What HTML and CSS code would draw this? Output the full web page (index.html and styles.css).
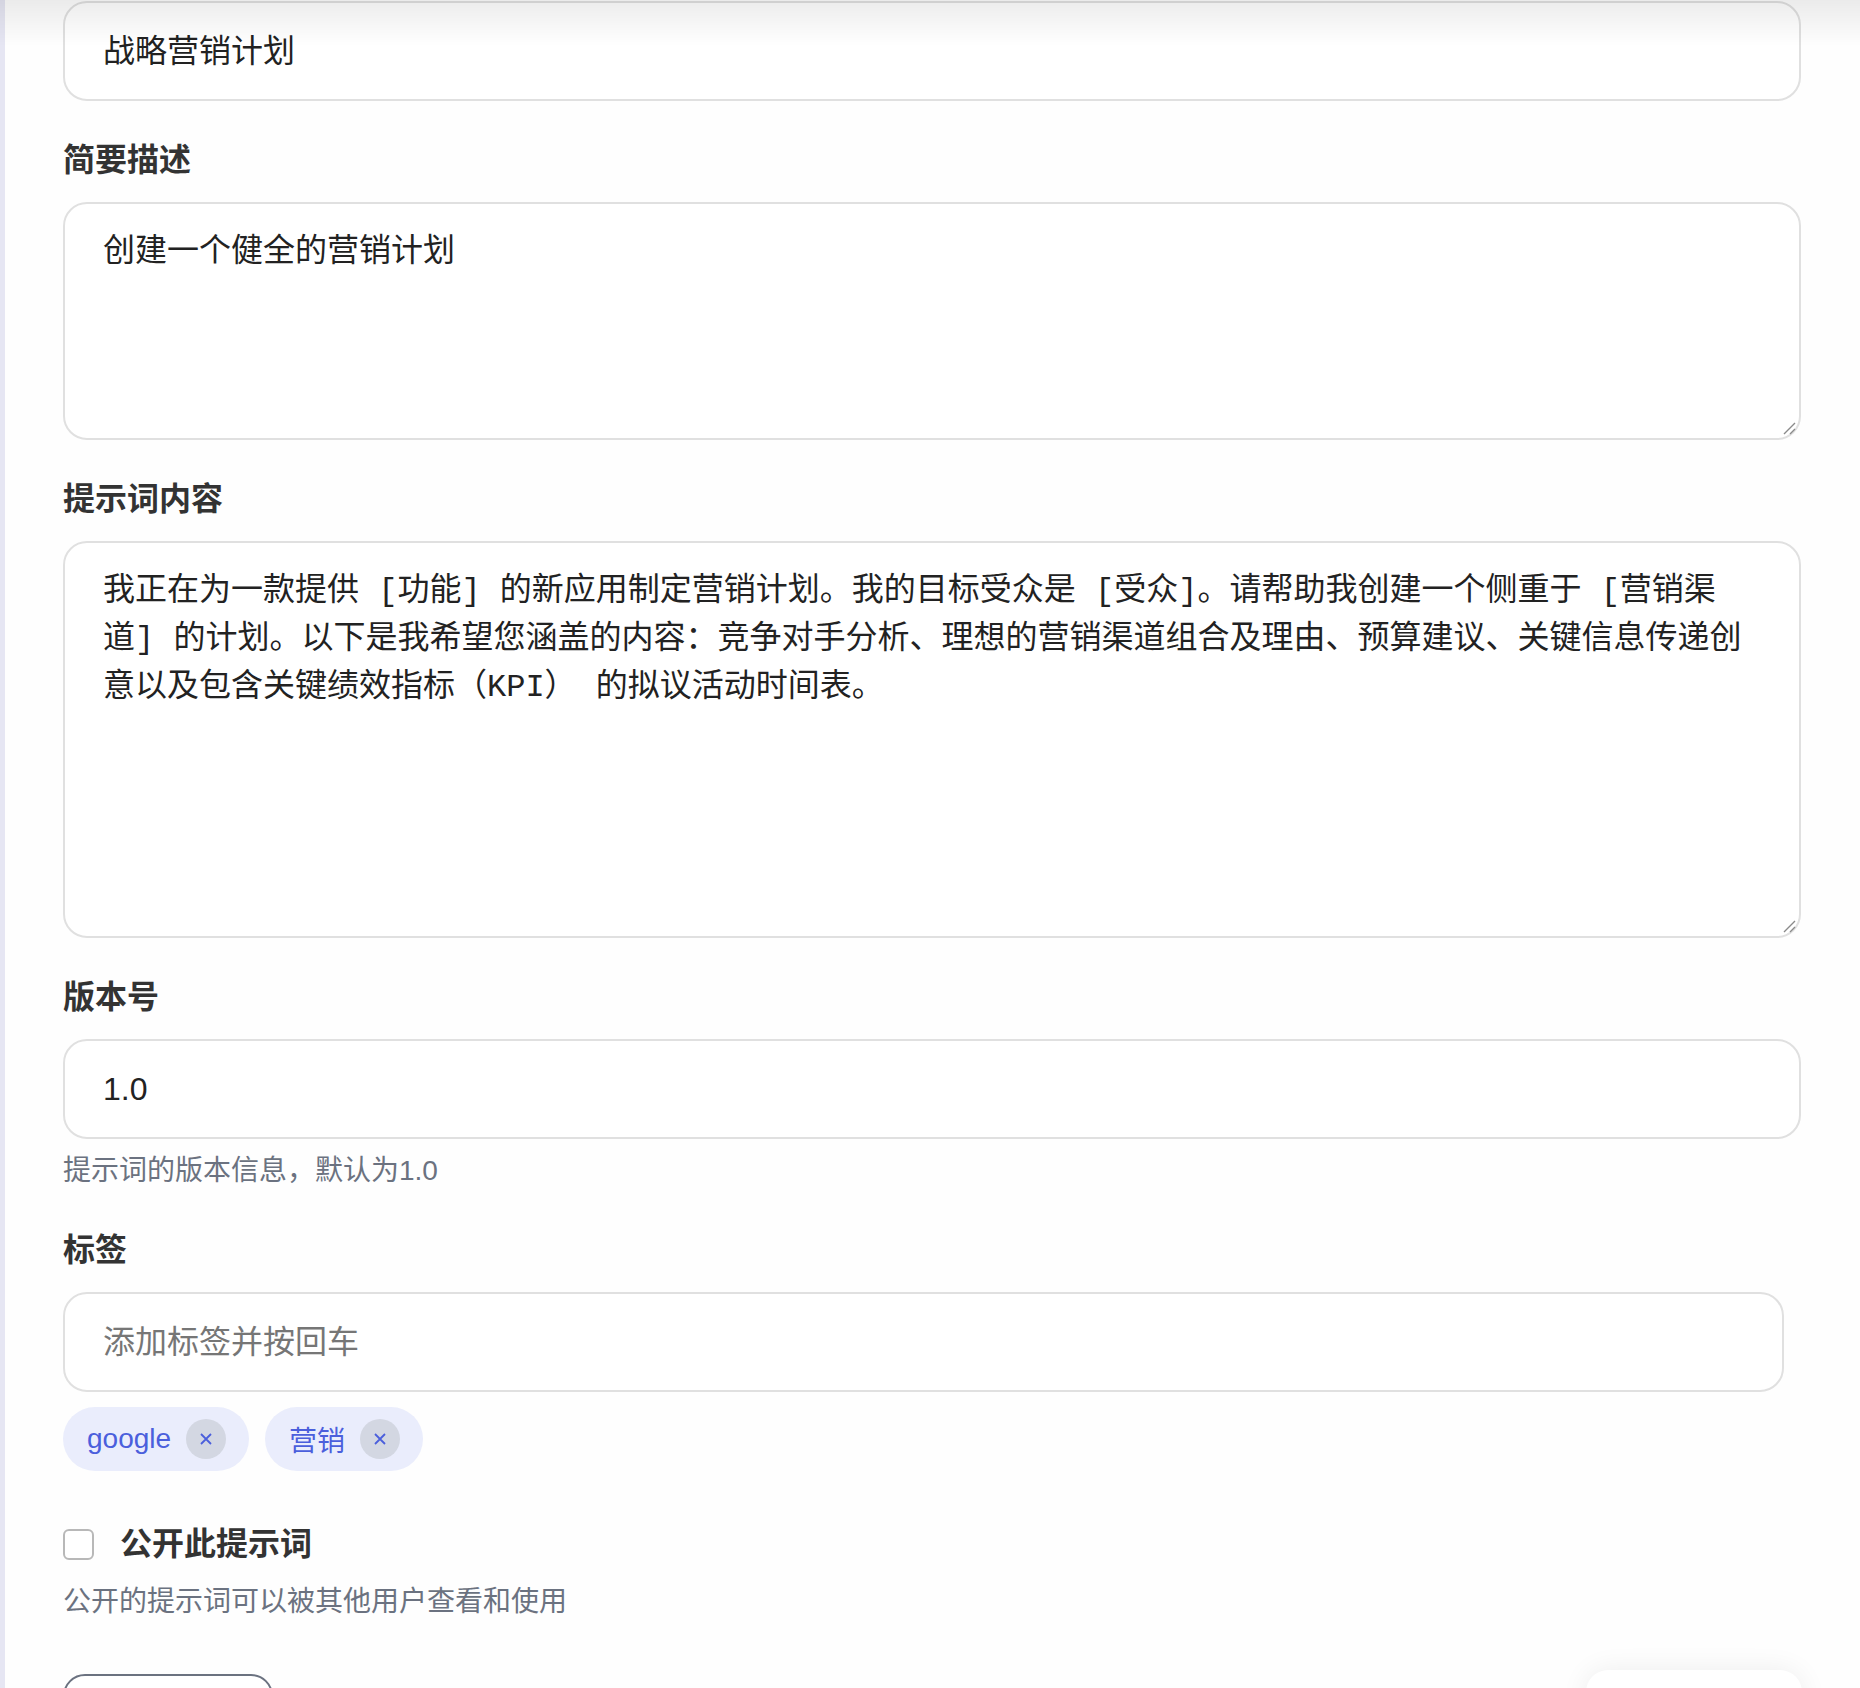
FILE: index.html
```html
<!DOCTYPE html>
<html lang="zh-CN">
	<head>
		<meta charset="utf-8" />
		<link rel="stylesheet" href="styles.css">
		<title>编辑提示词</title>
	</head>
	<body>
		<div class="shade"></div>
		<div class="page">
			<form class="form">
				<div class="field">
					<input class="text-input title-input" type="text" value="战略营销计划" />
				</div>

				<div class="field">
					<label class="label">简要描述</label>
					<div class="area">
						<textarea class="text-area short">创建一个健全的营销计划</textarea>
						<svg class="grip" width="16" height="16" viewBox="0 0 16 16"><path d="M15 4 L4 15 M15 10 L10 15" stroke="#8a8a8a" stroke-width="1.4" fill="none"/></svg>
					</div>
				</div>

				<div class="field">
					<label class="label">提示词内容</label>
					<div class="area">
						<textarea class="text-area tall">我正在为一款提供 [功能] 的新应用制定营销计划。我的目标受众是 [受众]。请帮助我创建一个侧重于 [营销渠道] 的计划。以下是我希望您涵盖的内容：竞争对手分析、理想的营销渠道组合及理由、预算建议、关键信息传递创意以及包含关键绩效指标（KPI） 的拟议活动时间表。</textarea>
						<svg class="grip" width="16" height="16" viewBox="0 0 16 16"><path d="M15 4 L4 15 M15 10 L10 15" stroke="#8a8a8a" stroke-width="1.4" fill="none"/></svg>
					</div>
				</div>

				<div class="field">
					<label class="label">版本号</label>
					<input class="text-input" type="text" value="1.0" />
					<p class="hint">提示词的版本信息，默认为1.0</p>
				</div>

				<div class="field">
					<label class="label">标签</label>
					<input class="text-input tag-input" type="text" placeholder="添加标签并按回车" />
					<div class="tags">
						<span class="tag">google<span class="tag-x"><svg width="14" height="14" viewBox="0 0 14 14"><path d="M2 2 L12 12 M12 2 L2 12" stroke="#4b5fdc" stroke-width="1.8" fill="none"/></svg></span></span>
						<span class="tag">营销<span class="tag-x"><svg width="14" height="14" viewBox="0 0 14 14"><path d="M2 2 L12 12 M12 2 L2 12" stroke="#4b5fdc" stroke-width="1.8" fill="none"/></svg></span></span>
					</div>
				</div>

				<div class="check-row">
					<span class="checkbox"></span>
					<span class="check-label">公开此提示词</span>
				</div>
				<p class="hint public-hint">公开的提示词可以被其他用户查看和使用</p>

				<div class="actions">
					<button class="btn-cancel" type="button" aria-label="取消"></button>
					<div class="btn-save"></div>
				</div>
			</form>
		</div>
	</body>
</html>
```

FILE: styles.css
```css
body,html{
	margin:0;
	padding:0;
	background-color:#fefefe;
	font-family:"Liberation Sans","Noto Sans CJK SC",sans-serif;
	color:#222;
}
p,form{
	margin:0;
	padding:0;
}
.shade{
	position:fixed;
	left:0;
	top:0;
	right:0;
	height:46px;
	background:linear-gradient(rgba(0,0,0,0.075),rgba(0,0,0,0));
	pointer-events:none;
	z-index:5;
}
.page{
	border-left:5px solid #e6e6f3;
	padding:1px 59px 0 58px;
	min-height:1700px;
}
.field + .field{
	margin-top:39px;
}
.label{
	display:block;
	font-size:32px;
	line-height:40px;
	font-weight:700;
	color:#333;
	margin-bottom:22px;
}
.text-input{
	display:block;
	box-sizing:border-box;
	width:100%;
	height:100px;
	padding:0 38px;
	border:2px solid #e0e0e0;
	border-radius:24px;
	background:#fff;
	font-family:"Liberation Sans","Noto Sans CJK SC",sans-serif;
	font-size:32px;
	color:#222;
	outline:none;
}
.title-input{
	padding-bottom:7px;
}
.text-input::placeholder{
	color:#767676;
}
.field .tag-input{
	width:calc(100% - 17px);
}
.area{
	position:relative;
}
.text-area{
	display:block;
	box-sizing:border-box;
	width:100%;
	padding:25px 38px 19px;
	border:2px solid #e0e0e0;
	border-radius:24px;
	background:#fff;
	font-family:"Liberation Mono","Noto Sans CJK SC",monospace;
	font-size:32px;
	line-height:48px;
	color:#222;
	resize:none;
	outline:none;
}
.text-area.short{
	height:238px;
}
.text-area.tall{
	height:397px;
}
.grip{
	position:absolute;
	right:5px;
	bottom:5px;
}
.hint{
	margin-top:12px;
	font-size:28px;
	line-height:40px;
	color:#6b7280;
}
.tags{
	display:flex;
	gap:16px;
	margin-top:15px;
}
.tag{
	display:flex;
	align-items:center;
	gap:15px;
	height:64px;
	padding:0 23px 0 24px;
	border-radius:32px;
	background:#eaedfc;
	color:#4b5fdc;
	font-size:28px;
}
.tag-x{
	display:flex;
	align-items:center;
	justify-content:center;
	width:40px;
	height:40px;
	border-radius:50%;
	background:#d3d7e2;
}
.check-row{
	display:flex;
	align-items:center;
	margin-top:49px;
	height:48px;
}
.checkbox{
	box-sizing:border-box;
	width:31px;
	height:31px;
	border:2px solid #b8b8b8;
	border-radius:6px;
	background:#fff;
	margin-right:26px;
}
.check-label{
	font-size:32px;
	line-height:48px;
	font-weight:700;
	color:#333;
}
.public-hint{
	margin-top:14px;
}
.actions{
	display:flex;
	justify-content:space-between;
	align-items:flex-start;
	margin-top:52px;
}
.btn-cancel{
	box-sizing:border-box;
	width:210px;
	height:88px;
	border:2px solid #6b7280;
	border-radius:22px;
	background:#fff;
}
.btn-save{
	width:216px;
	height:88px;
	margin-top:-4px;
	margin-right:-1px;
	border-radius:22px;
	background:#fff;
	box-shadow:0 0 28px rgba(0,0,0,0.07);
}
```
